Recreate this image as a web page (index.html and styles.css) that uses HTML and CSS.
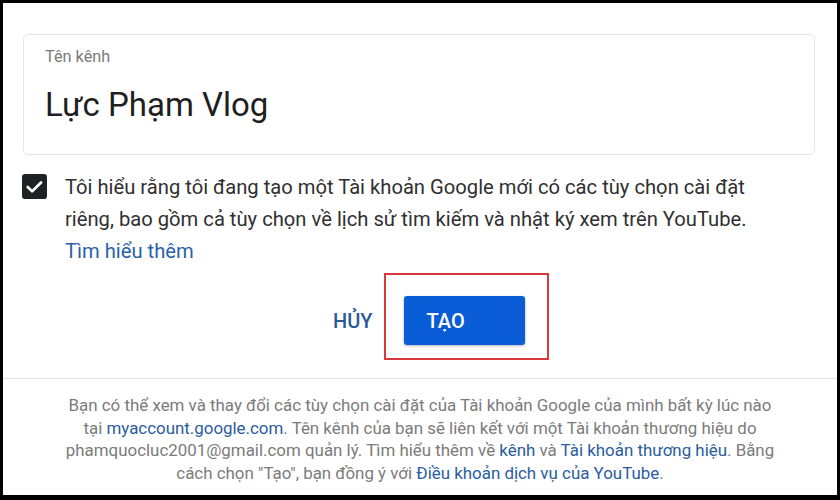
FILE: index.html
```html
<!DOCTYPE html>
<html lang="vi">
<head>
<meta charset="utf-8">
<title>Tạo kênh</title>
<link rel="stylesheet" href="styles.css">
</head>
<body>
<div class="frame">
  <div class="dialog">
    <div class="field">
      <div class="field-label">Tên kênh</div>
      <div class="field-value">Lực Phạm Vlog</div>
    </div>
    <div class="consent">
      <span class="checkbox">
        <svg viewBox="0 0 24 24" width="25" height="25"><rect x="0" y="0" width="24" height="24" rx="3" fill="#202124"/><path d="M5.5 12.5l4.2 4.2 8.6-8.6" fill="none" stroke="#fff" stroke-width="2.6" stroke-linecap="round" stroke-linejoin="round"/></svg>
      </span>
      <p class="consent-text">Tôi hiểu rằng tôi đang tạo một Tài khoản Google mới có các tùy chọn cài đặt riêng, bao gồm cả tùy chọn về lịch sử tìm kiếm và nhật ký xem trên YouTube.<br><a class="link">Tìm hiểu thêm</a></p>
    </div>
    <div class="actions">
      <span class="btn-cancel">HỦY</span>
      <div class="highlight">
        <span class="btn-create">TẠO</span>
      </div>
    </div>
  </div>
  <div class="footer">
    <p>Bạn có thể xem và thay đổi các tùy chọn cài đặt của Tài khoản Google của mình bất kỳ lúc nào<br>tại <a class="flink">myaccount.google.com</a>. Tên kênh của bạn sẽ liên kết với một Tài khoản thương hiệu do<br>phamquocluc2001@gmail.com quản lý. Tìm hiểu thêm về <a class="flink">kênh</a> và <a class="flink">Tài khoản thương hiệu</a>. Bằng<br>cách chọn "Tạo", bạn đồng ý với <a class="flink">Điều khoản dịch vụ của YouTube</a>.</p>
  </div>
</div>
</body>
</html>
```

FILE: styles.css
```css
html, body {
  margin: 0;
  padding: 0;
  background: #000;
}
body {
  font-family: Roboto, "Noto Sans", Arial, sans-serif;
  width: 840px;
  height: 500px;
  overflow: hidden;
}
.frame {
  margin: 3px 3px 0 3px;
  width: 834px;
  height: 492px;
  background: #fff;
  display: flex;
  flex-direction: column;
}
.dialog {
  padding: 31px 22px 0 20px;
  border-bottom: 1px solid #e4e4e4;
  height: 376px;
  box-sizing: border-box;
  flex: none;
}
.field {
  border: 1px solid #e6e6e6;
  border-radius: 5px;
  height: 121px;
  box-sizing: border-box;
  padding: 12px 0 0 21px;
}
.field-label {
  font-size: 16.3px;
  line-height: 20px;
  color: #7a7a7a;
}
.field-value {
  margin-top: 18px;
  font-size: 33px;
  line-height: 40px;
  color: #1f1f1f;
}
.consent {
  display: flex;
  align-items: flex-start;
  margin-top: 16px;
}
.checkbox {
  width: 25px;
  height: 25px;
  margin: 3px 18px 0 -1px;
  flex: none;
}
.checkbox svg { display: block; }
.consent-text {
  margin: 0;
  font-size: 20.2px;
  line-height: 32px;
  color: #303030;
  width: 730px;
}
.link {
  color: #2a62a8;
}
.actions {
  display: flex;
  align-items: flex-start;
  padding-left: 310px;
  margin-top: 6px;
}
.btn-cancel {
  font-size: 20px;
  font-weight: 500;
  color: #2b5a96;
  margin: 38px 11px 0 0;
  line-height: 20px;
}
.highlight {
  border: 2px solid #d9393c;
  padding: 21px 22px 13px 18px;
}
.btn-create {
  display: flex;
  align-items: center;
  width: 121px;
  height: 49px;
  box-sizing: border-box;
  padding-left: 23px;
  background: #0a5dd6;
  border-radius: 3px;
  color: #fff;
  font-size: 20px;
  font-weight: 500;
  box-shadow: 0 1px 3px rgba(0,0,0,0.3);
}
.footer {
  flex: 1;
  background: #fff;
  padding-top: 15px;
}
.footer p {
  margin: 0;
  text-align: center;
  font-size: 16.9px;
  line-height: 22.5px;
  color: #7b7b7b;
}
.flink {
  color: #2a5c9e;
}
```
